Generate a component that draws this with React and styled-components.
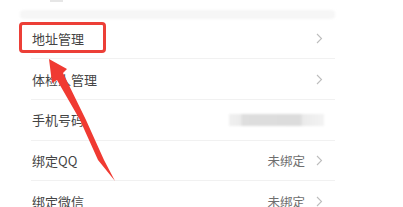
import React from "react"
import styled, { createGlobalStyle } from "styled-components"

const GlobalStyle = createGlobalStyle`
  body {
    margin: 0;
    background: #fff;
    font-family: "Noto Sans CJK SC", "Noto Sans", sans-serif;
  }
`

const rows = [
  { label: "地址管理", arrow: true },
  { label: "体检人管理", arrow: true },
  { label: "手机号码", masked: true },
  { label: "绑定QQ", value: "未绑定", arrow: true },
  { label: "绑定微信", value: "未绑定", arrow: true },
]

const Chevron = () => (
  <svg width="7" height="11" viewBox="0 0 7 11">
    <path d="M1 1 L5.5 5.5 L1 10" fill="none" stroke="#bdbdbd" strokeWidth="1.1" />
  </svg>
)

export default function App() {
  return (
    <Page>
      <GlobalStyle />
      <TopStrip>
        <Smudge />
      </TopStrip>
      <Card>
        <Gap />
        {rows.map((r, i) => (
          <Row key={i} last={i === rows.length - 1}>
            <Label>{r.label}</Label>
            <Right>
              {r.value && <Value>{r.value}</Value>}
              {r.masked && <Masked />}
              {r.arrow && <Chevron />}
            </Right>
          </Row>
        ))}
      </Card>
      <Highlight />
      <Pointer width="403" height="207" viewBox="0 0 403 207">
        <polygon
          points="49,59 67,69 63,73 86,120 104,160 115,181 98,160 80,120 57,80 52,83"
          fill="#f03a32"
        />
      </Pointer>
    </Page>
  )
}

const Page = styled.div`
  position: relative;
  width: 403px;
  height: 207px;
  overflow: hidden;
  background: #fff;
`
const TopStrip = styled.div`
  height: 10px;
  padding-left: 50px;
`
const Smudge = styled.div`
  width: 13px;
  height: 2px;
  background: #e6e6e6;
  filter: blur(0.5px);
`
const Card = styled.div`
  margin-left: 20px;
  width: 315px;
`
const Gap = styled.div`
  height: 8.7px;
  background: #f6f6f6;
  border-radius: 4px;
  filter: blur(0.8px);
`
const Row = styled.div`
  display: flex;
  align-items: center;
  justify-content: space-between;
  height: 40.7px;
  box-sizing: border-box;
  margin-left: 11px;
  padding-right: 12px;
  border-bottom: ${(p) => (p.last ? "none" : "1px solid #f1f1f1")};
`
const Label = styled.span`
  font-size: 13px;
  color: #444;
  padding-left: 1px;
`
const Right = styled.div`
  display: flex;
  align-items: center;
  gap: 11px;
`
const Value = styled.span`
  font-size: 12.5px;
  color: #6e6e6e;
`
const Masked = styled.div`
  width: 95px;
  height: 12px;
  margin-right: -1px;
  background: linear-gradient(
    to right,
    #f0f0f0 0%,
    #ececec 12%,
    #dedede 14%,
    #dcdcdc 75%,
    #ebebeb 78%,
    #f3f3f3 100%
  );
  filter: blur(1.2px);
`
const Highlight = styled.div`
  position: absolute;
  left: 19px;
  top: 22px;
  width: 87px;
  height: 31px;
  box-sizing: border-box;
  border: 3px solid #ec3f37;
  border-radius: 4px;
`
const Pointer = styled.svg`
  position: absolute;
  left: 0;
  top: 0;
`
